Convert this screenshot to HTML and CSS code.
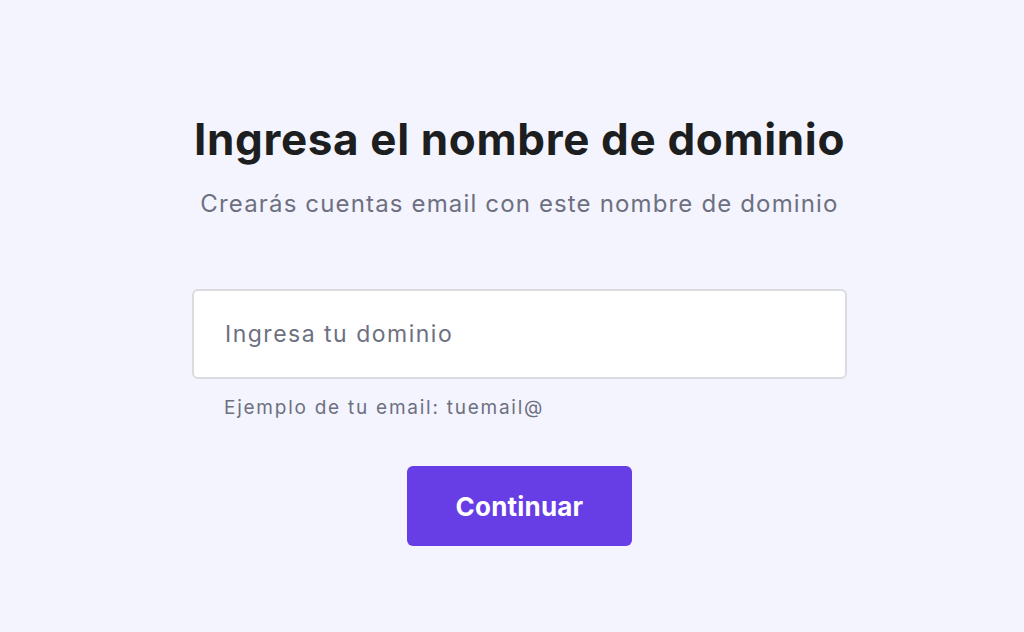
FILE: index.html
```html
<!DOCTYPE html>
<html lang="es">
<head>
<meta charset="utf-8">
<link rel="stylesheet" href="styles.css">
<title>Ingresa el nombre de dominio</title>
</head>
<body>
<main class="page">
  <section class="card">
    <h1 class="title">Ingresa el nombre de dominio</h1>
    <p class="subtitle">Crearás cuentas email con este nombre de dominio</p>
    <div class="field">
      <input class="input" type="text" placeholder="Ingresa tu dominio">
      <p class="hint">Ejemplo de tu email: tuemail@</p>
    </div>
    <button class="btn" type="button">Continuar</button>
  </section>
</main>
</body>
</html>
```
FILE: styles.css
```css
html, body {
  margin: 0;
  padding: 0;
  background: #f4f4fe;
}
body {
  font-family: "Inter", "Roboto", sans-serif;
  width: 1024px;
  height: 632px;
  overflow: hidden;
}
.page {
  display: flex;
  justify-content: center;
  padding-left: 15px;
  padding-top: 111px;
}
.card {
  width: 655px;
  display: flex;
  flex-direction: column;
  align-items: center;
}
.title {
  margin: 0;
  font-size: 44px;
  line-height: 56px;
  font-weight: 700;
  color: #1d1e20;
  letter-spacing: 0.65px;
}
.subtitle {
  margin: 21px 0 0;
  font-size: 24px;
  line-height: 32px;
  color: #6d7081;
  letter-spacing: 1.15px;
}
.field {
  align-self: stretch;
  margin-top: 69px;
}
.input {
  box-sizing: border-box;
  display: block;
  width: 100%;
  height: 90px;
  border: 2px solid #dadce0;
  border-radius: 6px;
  background: #fff;
  padding: 0 31px;
  font-family: inherit;
  font-size: 23px;
  letter-spacing: 1.5px;
  color: #1d1e20;
  outline: none;
}
.input::placeholder {
  color: #6d7081;
}
.hint {
  margin: 15px 0 0 32px;
  font-size: 19px;
  line-height: 28px;
  color: #6d7081;
  letter-spacing: 1.75px;
}
.btn {
  margin-top: 44px;
  width: 225px;
  height: 80px;
  border: none;
  border-radius: 6px;
  background: #673de6;
  color: #fff;
  font-family: inherit;
  font-size: 26px;
  font-weight: 700;
  letter-spacing: 0.2px;
  cursor: pointer;
}
```
